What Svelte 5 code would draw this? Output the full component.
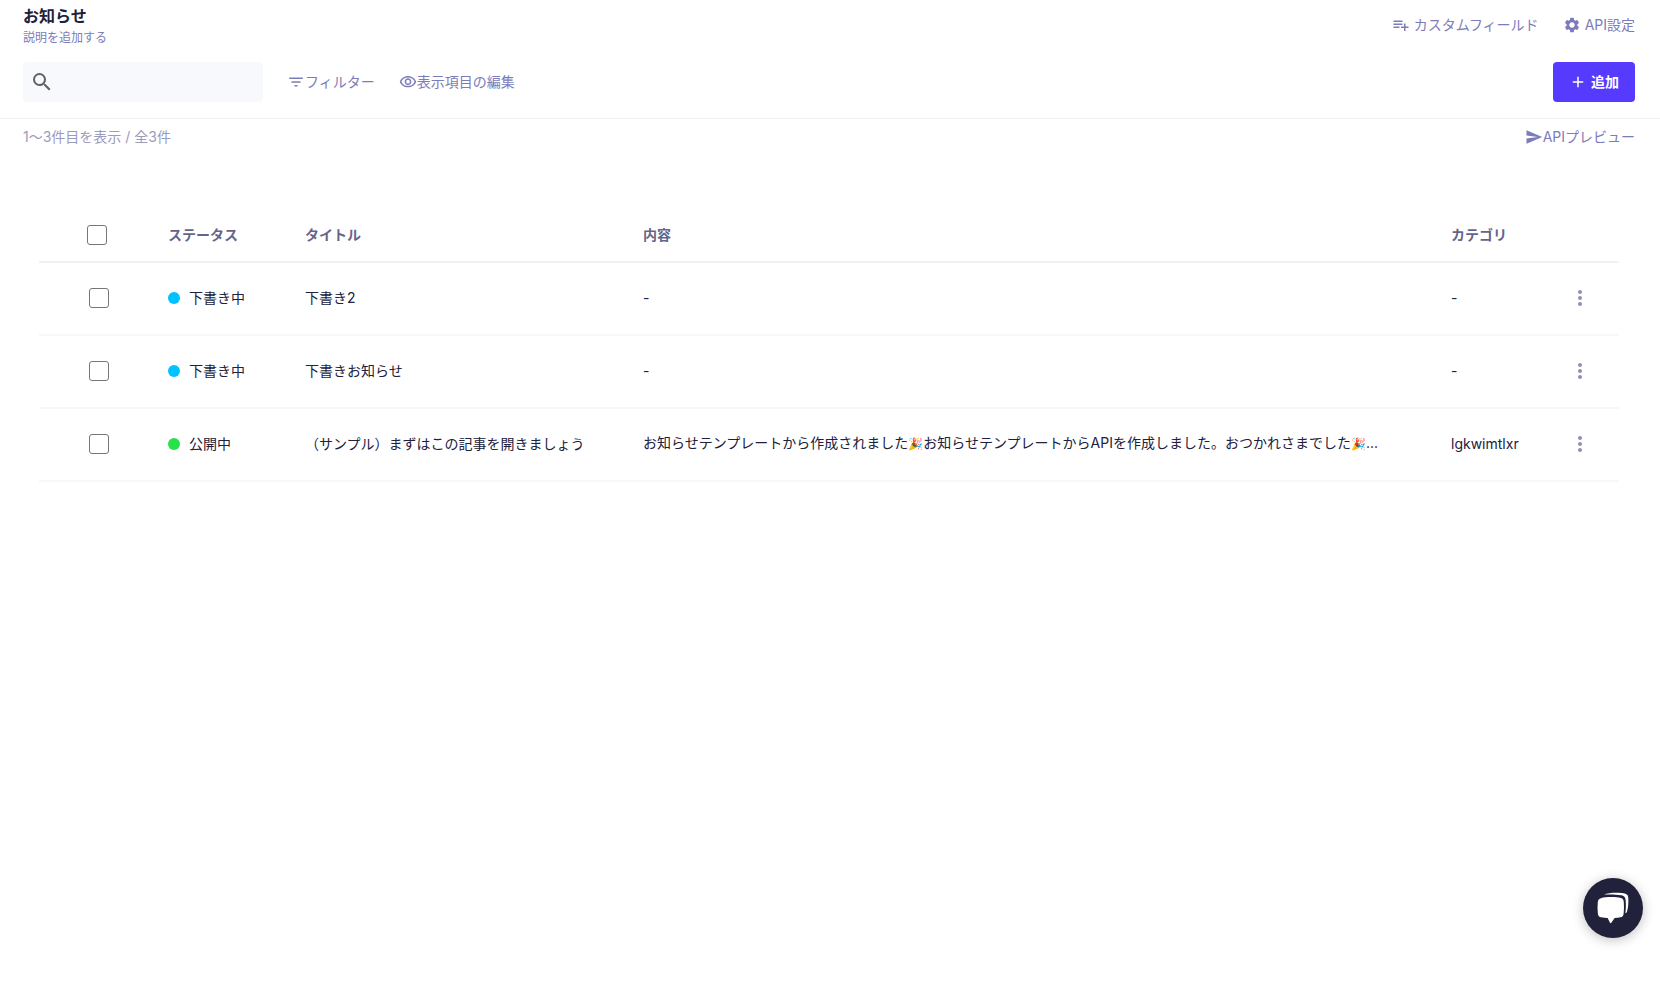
<script lang="ts">
  type Status = 'draft' | 'published';

  interface Entry {
    id: number;
    status: Status;
    title: string;
    body: string;
    category: string;
  }

  const statusLabels: Record<Status, string> = {
    draft: '下書き中',
    published: '公開中'
  };

  const entries: Entry[] = [
    { id: 1, status: 'draft', title: '下書き2', body: '-', category: '-' },
    { id: 2, status: 'draft', title: '下書きお知らせ', body: '-', category: '-' },
    {
      id: 3,
      status: 'published',
      title: '（サンプル）まずはこの記事を開きましょう',
      body: 'お知らせテンプレートから作成されました🎉お知らせテンプレートからAPIを作成しました。おつかれさまでした🎉...',
      category: 'lgkwimtlxr'
    }
  ];

  let keyword = $state('');
  let selected: number[] = $state([]);
  let allSelected = $derived(selected.length === entries.length);

  function toggleAll() {
    selected = allSelected ? [] : entries.map((entry) => entry.id);
  }

  // Emoji are drawn a little smaller than the text around them
  function splitEmoji(text: string): string[] {
    return text.split(/(\p{Extended_Pictographic})/u);
  }
</script>

{#snippet icon(path: string, size = 18)}
  <svg width={size} height={size} viewBox="0 0 24 24" fill="currentColor" aria-hidden="true">
    <path d={path} />
  </svg>
{/snippet}

<div class="page">
  <header class="header">
    <div class="title-row">
      <div class="title-block">
        <h1>お知らせ</h1>
        <button class="description">説明を追加する</button>
      </div>
      <nav class="actions">
        <a class="action spaced" href="#custom-fields">
          {@render icon('M14 10H2v2h12v-2zm0-4H2v2h12V6zm4 8v-4h-2v4h-4v2h4v4h2v-4h4v-2h-4zM2 16h8v-2H2v2z')}
          カスタムフィールド
        </a>
        <a class="action spaced" href="#settings">
          {@render icon('M19.14 12.94c.04-.3.06-.61.06-.94 0-.32-.02-.64-.07-.94l2.03-1.58a.49.49 0 0 0 .12-.61l-1.92-3.32a.488.488 0 0 0-.59-.22l-2.39.96c-.5-.38-1.03-.7-1.62-.94l-.36-2.54a.484.484 0 0 0-.48-.41h-3.84c-.24 0-.43.17-.47.41l-.36 2.54c-.59.24-1.13.57-1.62.94l-2.39-.96c-.22-.08-.47 0-.59.22L2.74 8.87c-.12.21-.08.47.12.61l2.03 1.58c-.05.3-.09.63-.09.94s.02.64.07.94l-2.03 1.58a.49.49 0 0 0-.12.61l1.92 3.32c.12.22.37.29.59.22l2.39-.96c.5.38 1.03.7 1.62.94l.36 2.54c.05.24.24.41.48.41h3.84c.24 0 .44-.17.47-.41l.36-2.54c.59-.24 1.13-.56 1.62-.94l2.39.96c.22.08.47 0 .59-.22l1.92-3.32c.12-.22.07-.47-.12-.61l-2.01-1.58zM12 15.6c-1.98 0-3.6-1.62-3.6-3.6s1.62-3.6 3.6-3.6 3.6 1.62 3.6 3.6-1.62 3.6-3.6 3.6z')}
          API設定
        </a>
      </nav>
    </div>

    <div class="toolbar">
      <label class="search">
        {@render icon('M15.5 14h-.79l-.28-.27A6.471 6.471 0 0 0 16 9.5 6.5 6.5 0 1 0 9.5 16c1.61 0 3.09-.59 4.23-1.57l.27.28v.79l5 4.99L20.49 19l-4.99-5zm-6 0C7.01 14 5 11.99 5 9.5S7.01 5 9.5 5 14 7.01 14 9.5 11.99 14 9.5 14z', 24)}
        <input type="text" aria-label="検索" bind:value={keyword} />
      </label>
      <button class="action">
        {@render icon('M10 18h4v-2h-4v2zM3 6v2h18V6H3zm3 7h12v-2H6v2z')}
        フィルター
      </button>
      <button class="action">
        {@render icon('M12 6a9.77 9.77 0 0 1 8.82 5.5 9.77 9.77 0 0 1-17.64 0A9.77 9.77 0 0 1 12 6m0-2C7 4 2.73 7.11 1 11.5 2.73 15.89 7 19 12 19s9.27-3.11 11-7.5C21.27 7.11 17 4 12 4zm0 5a2.5 2.5 0 0 1 0 5 2.5 2.5 0 0 1 0-5m0-2c-2.48 0-4.5 2.02-4.5 4.5S9.52 16 12 16s4.5-2.02 4.5-4.5S14.48 7 12 7z')}
        表示項目の編集
      </button>
      <button class="add">
        {@render icon('M19 13h-6v6h-2v-6H5v-2h6V5h2v6h6v2z')}
        追加
      </button>
    </div>
  </header>

  <div class="summary">
    <p>1〜3件目を表示 / 全3件</p>
    <a class="action" href="#preview">
      {@render icon('M2.01 21L23 12 2.01 3 2 10l15 2-15 2z')}
      APIプレビュー
    </a>
  </div>

  <main>
    <table>
      <colgroup>
        <col class="col-check" />
        <col class="col-status" />
        <col class="col-title" />
        <col />
        <col class="col-category" />
        <col class="col-menu" />
      </colgroup>
      <thead>
        <tr>
          <th class="check">
            <input type="checkbox" aria-label="すべて選択" checked={allSelected} onchange={toggleAll} />
          </th>
          <th>ステータス</th>
          <th>タイトル</th>
          <th>内容</th>
          <th>カテゴリ</th>
          <th></th>
        </tr>
      </thead>
      <tbody>
        {#each entries as entry (entry.id)}
          <tr>
            <td class="check">
              <input type="checkbox" aria-label={entry.title} value={entry.id} bind:group={selected} />
            </td>
            <td>
              <span class="status">
                <span class="dot {entry.status}"></span>
                {statusLabels[entry.status]}
              </span>
            </td>
            <td>{entry.title}</td>
            <td class="body">
              {#each splitEmoji(entry.body) as part, i}{#if i % 2}<span class="emoji">{part}</span>{:else}{part}{/if}{/each}
            </td>
            <td>{entry.category}</td>
            <td class="menu">
              <button aria-label="メニュー">
                {@render icon('M12 8c1.1 0 2-.9 2-2s-.9-2-2-2-2 .9-2 2 .9 2 2 2zm0 2c-1.1 0-2 .9-2 2s.9 2 2 2 2-.9 2-2-.9-2-2-2zm0 6c-1.1 0-2 .9-2 2s.9 2 2 2 2-.9 2-2-.9-2-2-2z', 24)}
              </button>
            </td>
          </tr>
        {/each}
      </tbody>
    </table>
  </main>

  <button class="chat" aria-label="チャットを開く">
    <svg width="32" height="32" viewBox="0 0 32 32" fill="#fff" aria-hidden="true">
      <path d="M7 2.6C12 .4 24 .4 28.500 1.800C30.500 2.400 31.200 4 31.300 6C31.600 11 31.200 16 30 19.600C29.700 20.600 29 21.200 28.300 21.300C29 17 29 12 28.600 8C28.300 5 27 3.600 24.500 3.200C19 2.300 12 2.200 7 2.600Z" />
      <path d="M4 6.200C9 4.800 19 4.800 24 6C26 6.500 26.600 8 26.800 10C27.100 14 27.100 18 26.600 22C26.300 24 25.300 25 23.500 25.300C21.500 25.700 19.500 25.900 17.600 26L14.500 30.600C14 31.300 13.300 31.300 12.900 30.600L10.600 26C8.500 25.900 6.500 25.700 4 25.300C2.200 25 1.200 24 .9 22C.4 18 .4 14 .8 10C1 8 2 6.700 4 6.200Z" />
    </svg>
  </button>
</div>

<style>
  :global(body) {
    margin: 0;
    background: #fff;
  }

  .page {
    min-height: 100vh;
    color: #21213b;
    font-family: Inter, 'Noto Sans CJK JP', sans-serif;
    font-size: 14px;
    line-height: 20px;
  }

  button,
  input {
    font: inherit;
    color: inherit;
    border: none;
    background: none;
    padding: 0;
    margin: 0;
  }

  button {
    cursor: pointer;
  }

  svg {
    display: block;
    flex: none;
  }

  .header {
    padding: 4px 25px 16px 23px;
    border-bottom: 1px solid #f0f0f5;
  }

  .title-row {
    display: flex;
    justify-content: space-between;
    align-items: center;
    height: 42px;
  }

  .title-block {
    display: flex;
    flex-direction: column;
    align-items: flex-start;
    align-self: flex-start;
  }

  h1 {
    margin: 0;
    font-size: 16px;
    font-weight: 700;
    line-height: 24px;
  }

  .description {
    color: #7c7cba;
    font-size: 12px;
    line-height: 20px;
  }

  .actions {
    display: flex;
    gap: 24px;
  }

  .action {
    display: flex;
    align-items: center;
    color: #7c7cba;
    text-decoration: none;
    white-space: nowrap;
  }

  .spaced {
    gap: 4px;
  }

  .toolbar {
    display: flex;
    align-items: center;
    gap: 24px;
    margin-top: 16px;
  }

  .search {
    display: flex;
    align-items: center;
    box-sizing: border-box;
    width: 240px;
    height: 40px;
    padding: 0 8px 0 7px;
    border-radius: 4px;
    background: #f8f9fd;
    color: #616161;
  }

  .search input {
    flex: 1;
    min-width: 0;
    margin-left: 8px;
    outline: none;
  }

  .add {
    display: flex;
    align-items: center;
    gap: 4px;
    height: 40px;
    margin-left: auto;
    padding: 0 16px;
    border-radius: 4px;
    background: #563bff;
    color: #fff;
    font-weight: 700;
  }

  .summary {
    display: flex;
    justify-content: space-between;
    align-items: center;
    padding: 8px 25px 8px 23px;
    color: #9b9bbb;
  }

  .summary p {
    margin: 0;
  }

  main {
    padding: 52px 41px 0 39px;
  }

  table {
    width: 100%;
    border-collapse: separate;
    border-spacing: 0;
    table-layout: fixed;
  }

  .col-check {
    width: 129px;
  }

  .col-status {
    width: 137px;
  }

  .col-title {
    width: 338px;
  }

  .col-category {
    width: 117px;
  }

  .col-menu {
    width: 51px;
  }

  th,
  td {
    padding: 0;
    text-align: left;
    white-space: nowrap;
  }

  th {
    height: 52px;
    padding-top: 2px;
    border-bottom: 2px solid #f0f0f7;
    color: #65658b;
    font-weight: 700;
  }

  td {
    height: 69px;
    padding-bottom: 2px;
    border-bottom: 2px solid #f8f8fa;
  }

  th.check {
    padding-left: 48px;
  }

  td.check {
    padding-left: 50px;
  }

  input[type='checkbox'] {
    appearance: none;
    display: block;
    box-sizing: border-box;
    width: 20px;
    height: 20px;
    border: 1px solid #767676;
    border-radius: 3px;
    background: #fff;
  }

  input[type='checkbox']:checked {
    background: #563bff;
  }

  .status {
    display: flex;
    align-items: center;
    gap: 9px;
  }

  .dot {
    width: 12px;
    height: 12px;
    border-radius: 50%;
  }

  .draft {
    background: #00c2ff;
  }

  .published {
    background: #28e048;
  }

  .emoji {
    font-size: 12px;
  }

  .menu button {
    display: block;
    color: #9090b5;
  }

  .chat {
    position: fixed;
    right: 17px;
    bottom: 51px;
    display: flex;
    align-items: center;
    justify-content: center;
    width: 60px;
    height: 60px;
    border-radius: 50%;
    background: #21213b;
    box-shadow: 0 2px 12px rgba(0, 0, 0, 0.25);
  }
</style>
